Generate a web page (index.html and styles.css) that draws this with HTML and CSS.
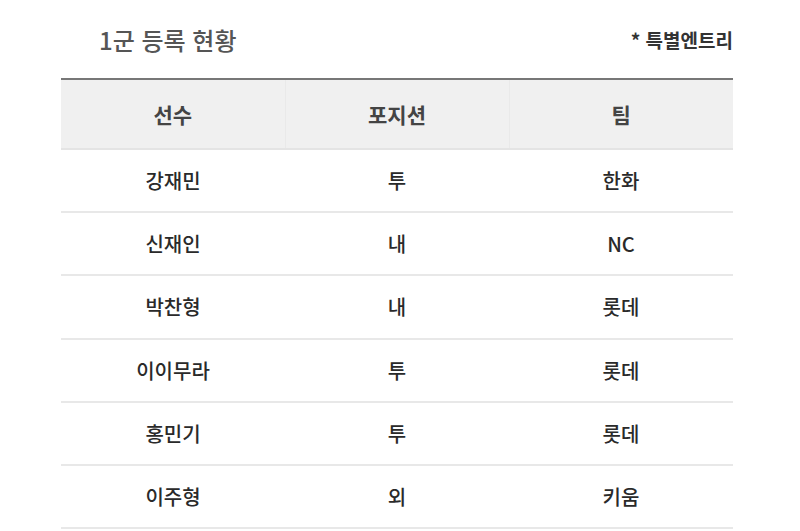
FILE: index.html
```html
<!DOCTYPE html>
<html lang="ko">
<head>
<meta charset="utf-8">
<link rel="stylesheet" href="styles.css">
</head>
<body>
<div class="wrap">
  <div class="top">
    <h2 class="title">1군 등록 현황</h2>
    <span class="note">* 특별엔트리</span>
  </div>
  <table class="roster">
    <thead>
      <tr><th>선수</th><th>포지션</th><th>팀</th></tr>
    </thead>
    <tbody>
      <tr><td>강재민</td><td>투</td><td>한화</td></tr>
      <tr><td>신재인</td><td>내</td><td>NC</td></tr>
      <tr><td>박찬형</td><td>내</td><td>롯데</td></tr>
      <tr><td>이이무라</td><td>투</td><td>롯데</td></tr>
      <tr><td>홍민기</td><td>투</td><td>롯데</td></tr>
      <tr><td>이주형</td><td>외</td><td>키움</td></tr>
    </tbody>
  </table>
</div>
</body>
</html>
```
FILE: styles.css
```css
html, body { margin: 0; padding: 0; background: #fff; }
body { font-family: "Noto Sans CJK KR", "Noto Sans", sans-serif; }
.wrap { width: 672px; margin-left: 61px; }
.top { display: flex; justify-content: space-between; align-items: center; height: 80px; box-sizing: border-box; }
.title { margin: 0 0 2px 38px; font-size: 24px; font-weight: 500; color: #555; }
.note { font-size: 19px; font-weight: 700; color: #333; margin-bottom: 2px; }
.roster { width: 100%; border-collapse: collapse; table-layout: fixed; border-top: 2px solid #777; margin-top: -2px; }
.roster th { height: 68px; background: #f0f0f0; font-size: 21px; font-weight: 700; color: #444; border-bottom: 2px solid #e4e4e4; border-left: 1px solid #e9e9e9; padding: 0; }
.roster th:first-child { border-left: none; }
.roster td { height: 61.2px; text-align: center; font-size: 20px; font-weight: 500; color: #2a2a2a; border-bottom: 2px solid #e8e8e8; padding: 0; }
```
